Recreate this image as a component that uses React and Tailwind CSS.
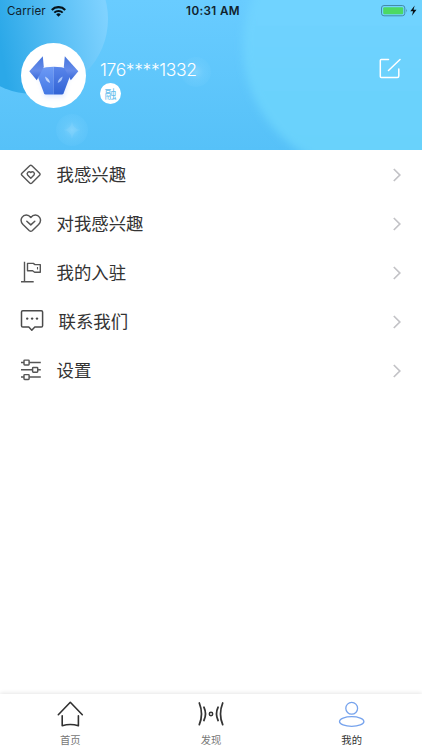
import React from "react";

const cjk = "font-['Noto_Sans_CJK_SC',sans-serif]";

function HeaderBackdrop() {
  return (
    <svg className="absolute inset-0" width="422" height="150" viewBox="0 0 422 150" aria-hidden="true">
      <defs>
        <linearGradient id="sky" x1="0" y1="0" x2="0" y2="1">
          <stop offset="0" stopColor="#69ccff" />
          <stop offset="1" stopColor="#56c1f8" />
        </linearGradient>
        <linearGradient id="leftBubble" gradientUnits="userSpaceOnUse" x1="0" y1="45" x2="108" y2="25">
          <stop offset="0" stopColor="#2ba8e8" />
          <stop offset="1" stopColor="#7fd2ff" />
        </linearGradient>
        <linearGradient id="rightBubble" x1="0" y1="0" x2="0" y2="1">
          <stop offset="0.3" stopColor="#70d3ff" />
          <stop offset="1" stopColor="#68d2fb" />
        </linearGradient>
        <radialGradient id="glow">
          <stop offset="0" stopColor="#a0e0ff" stopOpacity="0.5" />
          <stop offset="0.5" stopColor="#8ad8ff" stopOpacity="0.25" />
          <stop offset="1" stopColor="#80d4ff" stopOpacity="0.12" />
        </radialGradient>
        <filter id="soft"><feGaussianBlur stdDeviation="4" /></filter>
      </defs>
      <rect width="422" height="150" fill="url(#sky)" />
      <circle cx="33" cy="19" r="75" fill="url(#leftBubble)" />
      <circle cx="368" cy="46" r="125" fill="url(#rightBubble)" filter="url(#soft)" />
      <circle cx="72" cy="130" r="16" fill="url(#glow)" />
      <path d="M72 121q.8 8.200 9 9-8.200.8-9 9-.8-8.200-9-9 8.200-.8 9-9z" fill="#a0e0ff" opacity=".18" />
      <circle cx="196" cy="72" r="15" fill="url(#glow)" />
    </svg>
  );
}

function StatusBar() {
  return (
    <div className="relative grid h-[22px] grid-cols-3 items-center pl-[7px] pr-[4px] font-['Inter',sans-serif] text-[#10222d]">
      <div className="flex items-center gap-[5px]">
        <span className="pt-[2px] text-[11.6px] leading-none tracking-[0.1px]">Carrier</span>
        <svg width="15" height="11" viewBox="0 0 15 11" fill="none" stroke="#05131b">
          <path d="M.8 3.900a9.400 9.400 0 0 1 13.400 0" strokeWidth="2.200" />
          <path d="M3.300 6.600a6 6 0 0 1 8.400 0" strokeWidth="2" />
          <path d="M5.200 8.400a3.300 3.300 0 0 1 4.600 0L7.500 10.800z" fill="#05131b" stroke="none" />
        </svg>
      </div>
      <span className="pl-[1px] pt-[2px] text-center text-[11.7px] font-semibold leading-none tracking-[0.35px]">10:31 AM</span>
      <div className="flex items-center justify-end">
        <svg width="37" height="12" viewBox="0 0 37 12">
          <rect x="0.5" y="0.5" width="23.3" height="10.3" rx="2.5" fill="none" stroke="#448ca8" />
          <rect x="2.200" y="2.200" width="20" height="7" rx="1.2" fill="#4cd964" />
          <path d="M25.100 3.800q1.6 1.8 0 3.7z" fill="#448ca8" />
          <path d="M33.700 .5 29.300 6.300h2.800l-1.200 4.400 4.600-6h-3z" fill="#071015" />
        </svg>
      </div>
    </div>
  );
}

function BullLogo() {
  return (
    <svg width="65" height="65" viewBox="0 0 65 65">
      <defs>
        <linearGradient id="horn" x1="0" y1="0" x2="0" y2="1">
          <stop offset="0" stopColor="#4775dc" />
          <stop offset="0.6" stopColor="#648bea" />
          <stop offset="1" stopColor="#3767d7" />
        </linearGradient>
        <linearGradient id="faceL" x1="0" y1="0" x2="0" y2="1">
          <stop offset="0" stopColor="#6d9af5" />
          <stop offset="1" stopColor="#4378e4" />
        </linearGradient>
        <linearGradient id="faceR" x1="0" y1="0" x2="0" y2="1">
          <stop offset="0" stopColor="#5985ea" />
          <stop offset="1" stopColor="#3163d5" />
        </linearGradient>
        <filter id="logoShade" x="-30%" y="-30%" width="160%" height="160%"><feGaussianBlur stdDeviation="2.5" /></filter>
      </defs>
      <path d="M13 31 24 26h18l12 4-8 8-3 16H24l-4-16z" fill="#86adff" opacity=".28" filter="url(#logoShade)" />
      <path d="M18 26Q25 23.800 32.800 23.800V51.500H24.700q-1.200 0-1.700-1.200L17.300 35z" fill="url(#faceL)" />
      <path d="M47.600 26Q40.600 23.800 32.800 23.800V51.500h8.100q1.200 0 1.700-1.200L48.300 35z" fill="url(#faceR)" />
      <path d="M21.800 13.300 8.300 28.300 15.800 37.300 22.800 24z" fill="url(#horn)" />
      <path d="M43.800 13.300 57.300 28.300 49.800 37.300 42.800 24z" fill="url(#horn)" />
      <path d="M24 33.500q4.600 2.200 5 6.500-4.300-1.300-5-6.500z" fill="#bfd5fd" />
      <path d="M41.700 33.500q-4.600 2.200-5 6.500 4.300-1.300 5-6.500z" fill="#a6c4fa" />
    </svg>
  );
}

function DiamondIcon() {
  return (
    <svg width="23" height="23" viewBox="0 -0.5 23 23" fill="none" stroke="#555" strokeWidth="1.4" strokeLinejoin="round">
      <path d="M9.700 2.200 1.900 9.800q-1 1 0 2l7.800 7.700q1.100 1 2.200 0l7.700-7.700q1-1 0-2l-7.700-7.600q-1.100-1-2.200 0z" />
      <path d="m10.800 14.800-3.200-3.200C6.200 9.800 8.800 6.800 10.800 9c2-2.200 4.600.8 3.200 2.600z" />
    </svg>
  );
}

function HeartIcon() {
  return (
    <svg width="23" height="23" viewBox="0 -0.5 23 23" fill="none" stroke="#555" strokeWidth="1.450" strokeLinecap="round" strokeLinejoin="round">
      <path d="M10.800 5C8.200 1.600 4 2 2 4.800.4 7.200 1 9.700 3 12l6.400 6.200q1.400 1.100 2.800 0L18.600 12c2-2.300 2.600-4.800 1-7.200C17.600 2 13.400 1.600 10.800 5z" />
      <path d="m6.800 8.700 4 3.700 4-3.700" />
    </svg>
  );
}

function FlagIcon() {
  return (
    <svg width="23" height="23" viewBox="0 0 23 23" fill="none" stroke="#555" strokeWidth="1.4" strokeLinejoin="round">
      <path d="M4.500.8v20M1 20.700h12.700" />
      <path d="M7.500 2.400h5.800l1.700 1.200h5.300v7.600h-5.700l-2-1.500H7.500z" />
      <path d="M17.500 6v2.500" strokeWidth="1.100" />
    </svg>
  );
}

function MessageIcon() {
  return (
    <svg width="25" height="23" viewBox="0 0 25 23" fill="none" stroke="#4b4b4b" strokeWidth="1.500" strokeLinejoin="round">
      <path d="M2.800 .8h18.500q1.300 0 1.300 1.300v13.600q0 1.300-1.300 1.300h-6.500l-3 3.200-3-3.200h-6q-1.300 0-1.300-1.300V2.100q0-1.300 1.300-1.300z" />
      <g fill="#4b4b4b" stroke="none">
        <circle cx="7.200" cy="8.600" r="1.200" />
        <circle cx="12.100" cy="8.600" r="1.200" />
        <circle cx="17" cy="8.600" r="1.200" />
      </g>
    </svg>
  );
}

function SlidersIcon() {
  return (
    <svg width="23" height="23" viewBox="0 0.500 23 23" fill="none" stroke="#555" strokeWidth="1.450" strokeLinejoin="round">
      <path d="M1 4h3M9.200 4h11.600M1 11.300h11.600M17.700 11.300h3.100M1 18.500h3M9.200 18.500h11.600" />
      <rect x="4" y="1.600" width="5.100" height="4.800" rx=".7" />
      <rect x="12.600" y="8.900" width="5.100" height="4.800" rx=".7" />
      <rect x="4" y="16.100" width="5.100" height="4.800" rx=".7" />
    </svg>
  );
}

const rows = [
  { label: "我感兴趣", Icon: DiamondIcon },
  { label: "对我感兴趣", Icon: HeartIcon },
  { label: "我的入驻", Icon: FlagIcon },
  { label: "联系我们", Icon: MessageIcon },
  { label: "设置", Icon: SlidersIcon },
];

function MenuRow({ label, Icon }) {
  return (
    <li className="flex h-[49px] items-center pl-[20px] pr-[20px]">
      <Icon />
      <span className={`${cjk} ml-[13.500px] flex-1 pb-[1px] text-[17.400px] leading-[26px] text-[#333]`}>{label}</span>
      <svg width="10" height="14" viewBox="0 0 10 14" fill="none" stroke="#c2c2c6" strokeWidth="1.700">
        <path d="m1.800 1 6 6-6 6" />
      </svg>
    </li>
  );
}

function TabBar() {
  return (
    <nav className={`${cjk} grid h-[56px] grid-cols-3 bg-white pt-[6px] shadow-[0_-1px_4px_rgba(0,0,0,0.1)]`}>
      <a className="flex flex-col items-center gap-[4px] text-[10.300px] leading-[15px] text-[#777]">
        <svg width="28" height="28" viewBox="0 0 28 28" fill="none" stroke="#303030" strokeWidth="1.600" strokeLinecap="round" strokeLinejoin="round">
          <path d="M2.300 14.700 14.300 2.300l12 12.400M6.200 15.800v10q8.100-2.600 16.200 0v-10" />
        </svg>
        <span>首页</span>
      </a>
      <a className="flex flex-col items-center gap-[4px] text-[10.300px] leading-[15px] text-[#777]">
        <svg width="28" height="28" viewBox="0 0 28 28" fill="none" stroke="#333" strokeWidth="1.750" strokeLinecap="round">
          <path d="M2.300 3q4.400 11 0 21.700M6.900 7.200q3.200 6.800 0 13.300M25.700 3q-4.400 11 0 21.700M21.100 7.200q-3.200 6.800 0 13.300" />
          <circle cx="14" cy="14" r="1.700" strokeWidth="1.500" />
        </svg>
        <span>发现</span>
      </a>
      <a className="flex flex-col items-center gap-[4px] text-[10.300px] leading-[15px] text-[#333]">
        <svg width="28" height="28" viewBox="0 0 28 28" fill="none" stroke="#76a3ed" strokeWidth="1.300">
          <circle cx="13.700" cy="8.300" r="5.900" />
          <ellipse cx="13.700" cy="21.500" rx="12.200" ry="4.900" />
        </svg>
        <span>我的</span>
      </a>
    </nav>
  );
}

export default function App() {
  return (
    <div className="flex h-[750px] w-[422px] flex-col overflow-hidden bg-white">
      <header className="relative h-[150px] shrink-0 overflow-hidden">
        <HeaderBackdrop />
        <StatusBar />
        <div className="relative flex items-start pl-[21px] pr-[21px] pt-[21px]">
          <div className="h-[65px] w-[65px] shrink-0 rounded-full bg-white">
            <BullLogo />
          </div>
          <div className="ml-[14px] flex flex-1 flex-col items-start pt-[14px]">
            <span className="font-['Inter',sans-serif] text-[17.500px] font-light leading-[26px] tracking-[-0.380px] text-white">176****1332</span>
            <span className={`${cjk} flex h-[21px] w-[21px] items-center justify-center rounded-full bg-white text-[12px] leading-none text-[#63bdec]`}>融</span>
          </div>
          <svg className="mt-[14px]" width="22" height="23" viewBox="0 0 22 23" fill="none" stroke="#fff" strokeWidth="1.500" strokeLinecap="round" strokeLinejoin="round">
            <path d="M9.500 2.500H2.300q-1 0-1 1v16q0 1 1 1h16q1.500 0 1.500-1.500v-7M9.500 13.500 21 2.500" />
          </svg>
        </div>
      </header>
      <ul className="flex-1">
        {rows.map((row) => (
          <MenuRow key={row.label} {...row} />
        ))}
      </ul>
      <TabBar />
    </div>
  );
}
